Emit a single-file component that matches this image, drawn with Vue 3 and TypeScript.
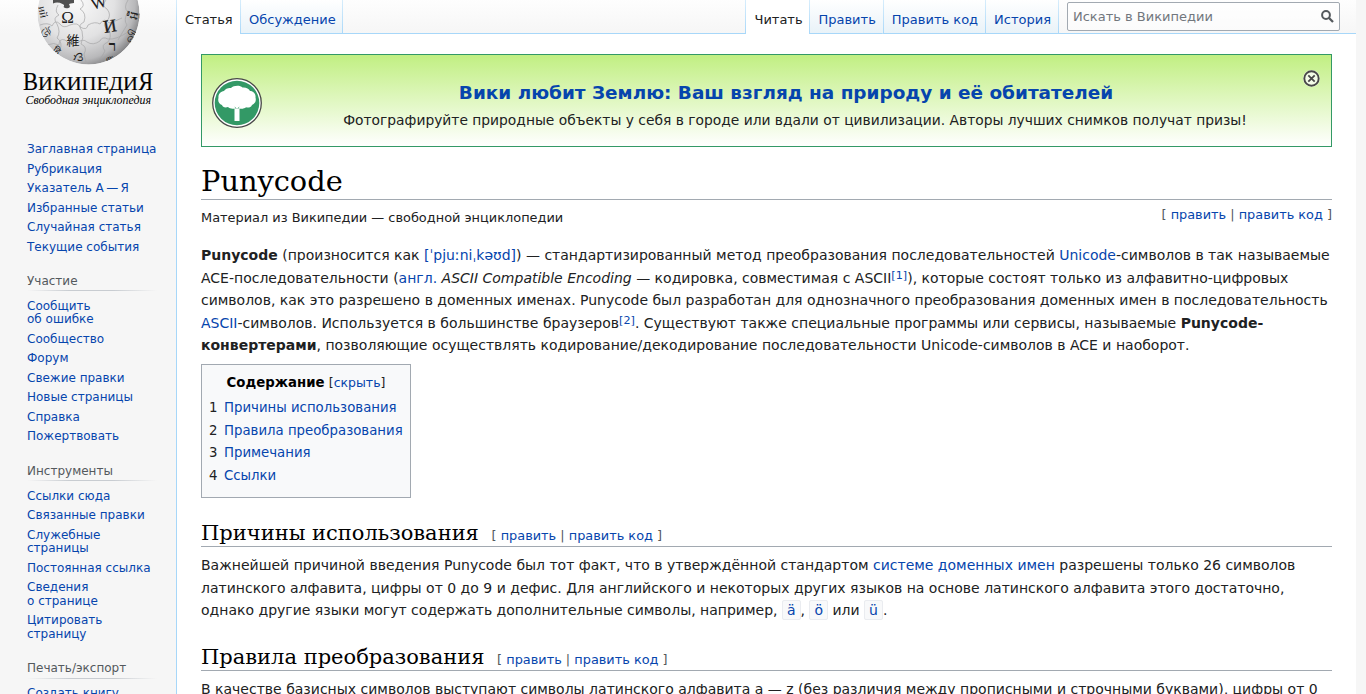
<script setup lang="ts">
interface NavGroup { title: string; items: string[][] }

const groups: NavGroup[] = [
  { title: '', items: [['Заглавная страница'], ['Рубрикация'], ['Указатель А\u2009—\u2009Я'], ['Избранные статьи'], ['Случайная статья'], ['Текущие события']] },
  { title: 'Участие', items: [['Сообщить', 'об ошибке'], ['Сообщество'], ['Форум'], ['Свежие правки'], ['Новые страницы'], ['Справка'], ['Пожертвовать']] },
  { title: 'Инструменты', items: [['Ссылки сюда'], ['Связанные правки'], ['Служебные', 'страницы'], ['Постоянная ссылка'], ['Сведения', 'о странице'], ['Цитировать', 'страницу']] },
  { title: 'Печать/экспорт', items: [['Создать книгу']] },
]
const toc: string[] = ['Причины использования', 'Правила преобразования', 'Примечания', 'Ссылки']
const views: string[] = ['Править', 'Править код', 'История']
</script>

<template>
  <div class="page">
    <aside class="side">
      <svg class="logo" width="160" height="112" viewBox="0 0 160 112">
        <defs>
          <radialGradient id="globe" cx="0.38" cy="0.38" r="0.68">
            <stop offset="0" stop-color="#fafafa" />
            <stop offset="0.55" stop-color="#e2e2e3" />
            <stop offset="0.85" stop-color="#b8b8ba" />
            <stop offset="1" stop-color="#7c7c7e" />
          </radialGradient>
          <clipPath id="ball"><circle cx="80.5" cy="13.5" r="51" /></clipPath>
        </defs>
        <g clip-path="url(#ball)">
          <circle cx="80.5" cy="13.5" r="51" fill="url(#globe)" />
          <path d="M45 0h21v3q-4 0-5 1.500 2 2.500-.5 3.500-3 1-5-1 1.500-2-1-3-5-2.500-9.500-.5z" fill="#505050" />
          <g fill="none" stroke="#a6a6a8" stroke-width=".7">
            <path d="M32 25q8-3 12 1 3-7 8-2 3 5 10 1 8-3 10 2 7 4 8-2 7-4 12-1 4-7 9-1 7-2 13-5" />
            <path d="M39 45q7-3 12 0 0-7 6-5 4 5 12 3 6-5 10-1 6 4 13-1 2-5 8-2 8 1 20-7" />
            <path d="M50 5q-4 7 1 10-7 3-2 9 4 8 0 14 6 4 3 12M73 0q5 6-1 9 7 4 4 13-7 3-2 9 2 7-1 13 7 3 3 10 1 6 3 10M98 0q-5 6 1 9 5 6 0 12-6 5 2 9 3 7-1 12-8 3-3 9-3 7-7 9M120 0q-5 8 0 12-5 8-1 13-5 8-9 15" />
          </g>
          <g fill="#202020" class="glyphs" text-anchor="middle">
            <text x="59.5" y="23" font-size="17">Ω</text>
            <text x="91" y="8" font-size="17" transform="rotate(-15 91 3)">W</text>
            <text x="102" y="32" font-size="18" stroke="#202020" stroke-width=".3" transform="rotate(-9 102 26)">И</text>
            <text x="65" y="44.5" font-size="13">維</text>
            <text x="104.5" y="51" font-size="15" font-weight="bold">ר</text>
            <text x="35.5" y="16" font-size="11" transform="rotate(78 35.5 12)">ий</text>
            <text x="37" y="37" font-size="12" transform="rotate(60 37 33)">উ</text>
            <text x="49" y="54" font-size="9" transform="rotate(38 49 51)">हि</text>
            <text x="72" y="61" font-size="12" transform="rotate(80 72 57)">ღ</text>
            <text x="126" y="19" font-size="12" transform="rotate(-78 126 15)">អ្វី</text>
            <text x="123" y="40" font-size="12" transform="rotate(-58 123 36)">வி</text>
            <text x="101" y="61" font-size="8" transform="rotate(-25 101 58)">ው</text>
          </g>
        </g>
        <g class="word">
          <text x="15" y="89.5" font-size="26" textLength="15" lengthAdjust="spacingAndGlyphs">В</text>
          <text x="30" y="89.5" font-size="19.5" textLength="100" lengthAdjust="spacingAndGlyphs">ИКИПЕДИ</text>
          <text x="130.500" y="89.5" font-size="26" textLength="14.500" lengthAdjust="spacingAndGlyphs">Я</text>
          <text class="tagline" x="17.5" y="104" font-size="12" font-style="italic" textLength="125.5" lengthAdjust="spacingAndGlyphs">Свободная энциклопедия</text>
        </g>
      </svg>
      <nav v-for="g in groups" :key="g.title" class="portal">
        <h3 v-if="g.title">{{ g.title }}</h3>
        <ul>
          <li v-for="it in g.items" :key="it[0]"><a><span v-for="l in it" :key="l">{{ l }}</span></a></li>
        </ul>
      </nav>
    </aside>

    <div class="main">
      <header class="head">
        <div class="tab on first"><span>Статья</span></div>
        <div class="tab talk"><a>Обсуждение</a></div>
        <div class="gap"></div>
        <div class="tab on read"><span>Читать</span></div>
        <div v-for="v in views" :key="v" class="tab"><a>{{ v }}</a></div>
        <div class="search">
          <span>Искать в Википедии</span>
          <svg width="13" height="13" viewBox="0 0 13 13"><circle cx="5" cy="5" r="3.9" fill="none" stroke="#54595d" stroke-width="2" /><path d="M7.8 7.8L12 12" stroke="#54595d" stroke-width="2.3" /></svg>
        </div>
      </header>

      <main class="content">
        <section class="banner">
          <svg class="tree" width="50" height="50" viewBox="0 0 50 50">
            <circle cx="25" cy="25" r="24.3" fill="#fff" stroke="#484848" stroke-width="1.3" />
            <circle cx="25" cy="25" r="22.3" fill="#339966" />
            <path d="M22.500 43V30.500C20 31 17.500 30.500 16 29 13 30 10.500 29 10 27 7 26 5.500 22.500 6.500 20 6 16 8.500 13.500 12 13 13.500 10.500 16.500 9.500 19 10 21.500 7.500 28 7 30.500 9.500 33.500 9 37 10.500 38 13 41.500 13 44 16 43.500 19.500 44.500 23 43 26 40 27 39 29.500 36 30 34 29.200 32.500 30.500 30 31 27.500 30.500V43z" fill="#fff" />
            <path d="M22.800 29.200q1 .5 1.300 1.500M27.200 29.200q-1 .5-1.300 1.500" fill="none" stroke="#339966" stroke-width=".9" />
          </svg>
          <div class="btext">
            <a>Вики любит Землю: Ваш взгляд на природу и её обитателей</a>
            <p>Фотографируйте природные объекты у себя в городе или вдали от цивилизации. Авторы лучших снимков получат призы!</p>
          </div>
          <svg class="close" width="17" height="17" viewBox="0 0 17 17"><circle cx="8.5" cy="8.5" r="8.5" fill="#fff" fill-opacity=".75" /><circle cx="8.5" cy="8.5" r="7.200" fill="none" stroke="#484848" stroke-width="1.900" /><path d="M5.300 5.300l6.400 6.400M11.700 5.300l-6.400 6.400" stroke="#484848" stroke-width="1.800" /></svg>
        </section>

        <h1>Punycode</h1>
        <div class="subrow">
          <div class="sub">Материал из Википедии — свободной энциклопедии</div>
          <div class="edit">[ <a>править</a> | <a>править код</a> ]</div>
        </div>

        <p class="lead"><b>Punycode</b> (произносится как <a>[ˈpjuːniˌkəʊd]</a>) — стандартизированный метод преобразования последовательностей <a>Unicode</a>-символов в так называемые<br />ACE-последовательности (<a>англ.</a> <i>ASCII Compatible Encoding</i> — кодировка, совместимая с ASCII<sup><a>[1]</a></sup>), которые состоят только из алфавитно-цифровых<br />символов, как это разрешено в доменных именах. Punycode был разработан для однозначного преобразования доменных имен в последовательность<br /><a>ASCII</a>-символов. Используется в большинстве браузеров<sup><a>[2]</a></sup>. Существуют также специальные программы или сервисы, называемые <b>Punycode-</b><br /><b>конвертерами</b>, позволяющие осуществлять кодирование/декодирование последовательности Unicode-символов в ACE и наоборот.</p>

        <div class="toc">
          <div class="toctitle"><b>Содержание</b> <span>[<a>скрыть</a>]</span></div>
          <ul>
            <li v-for="(t, i) in toc" :key="t"><span>{{ i + 1 }}</span><a>{{ t }}</a></li>
          </ul>
        </div>

        <h2>Причины использования <span class="edit">[ <a>править</a> | <a>править код</a> ]</span></h2>
        <p>Важнейшей причиной введения Punycode был тот факт, что в утверждённой стандартом <a>системе доменных имен</a> разрешены только 26 символов<br />латинского алфавита, цифры от 0 до 9 и дефис. Для английского и некоторых других языков на основе латинского алфавита этого достаточно,<br />однако другие языки могут содержать дополнительные символы, например, <code>ä</code>, <code>ö</code> или <code>ü</code>.</p>
        <h2>Правила преобразования <span class="edit">[ <a>править</a> | <a>править код</a> ]</span></h2>
        <p>В качестве базисных символов выступают символы латинского алфавита a — z (без различия между прописными и строчными буквами), цифры от 0</p>
      </main>
    </div>
  </div>
</template>

<style>
body { margin: 0; overflow: hidden; background: #f6f6f6; }
</style>
<style scoped>
.page { display: flex; width: 1356px; height: 694px; overflow: hidden; font-family: "DejaVu Sans", sans-serif; color: #202122; background: linear-gradient(#fff -6px, #f6f6f6 34px); }
a { color: #0645ad; }
ul { list-style: none; margin: 0; padding: 0; }
.side { width: 176px; flex: none; }
.logo { display: block; margin: 0 0 28.3px 8px; }
.glyphs { font-family: "Liberation Serif", "Noto Sans CJK JP", "DejaVu Sans", serif; }
.word { font-family: "Liberation Serif", serif; fill: #000; stroke: #000; stroke-width: .15px; }
.tagline { stroke: none; }
.portal { margin-left: 27px; width: 140px; font-size: 12px; line-height: 13.5px; }
.portal:nth-of-type(2) { margin-top: -.4px; }
.portal h3 { margin: 0 0 5.7px; padding: 17.7px 0 3.1px; height: 13.5px; width: 130px; font-size: 12px; font-weight: 400; color: #54595d; background: linear-gradient(to right, rgba(200,204,209,0), #c8ccd1 33%, #c8ccd1 66%, rgba(200,204,209,0)) bottom / 100% 1px no-repeat; }
.portal li { padding: 3px 0; white-space: nowrap; }
.portal li span { display: block; }
.main { flex: 1; display: flex; flex-direction: column; }
.head { height: 34px; box-sizing: border-box; display: flex; background: linear-gradient(#a7d7f9, #a7d7f9) bottom / 100% 1px no-repeat; font-size: 13px; }
.tab { box-sizing: border-box; height: 34px; padding: 12px 7px 0 8px; line-height: 16px; white-space: nowrap; border-right: 1px solid; border-image: linear-gradient(#d9eefc, #a7d7f9) 1; border-width: 0 1px 0 0; background: linear-gradient(#a7d7f9, #a7d7f9) bottom / 100% 1px no-repeat, linear-gradient(#fff, #e8f2f8); }
.tab.on { background: #fff; }
.tab.first { width: 65px; padding-left: 8px; border-left: 1px solid #a7d7f9; border-width: 0 1px 0 1px; }
.tab.talk { width: 102px; }
.gap { flex: 1; }
.tab.read { width: 65px; border-style: solid; border-width: 0 1px; }
.search { box-sizing: border-box; width: 273px; height: 29px; margin: 2px 16px 0 8px; padding: 0 5px; border: 1px solid #a2a9b1; border-radius: 2px; background: rgba(255,255,255,.5); display: flex; align-items: center; justify-content: space-between; color: #72777d; }
.content { flex: 1; background: #fff; border-left: 1px solid #a7d7f9; padding: 20px 24px 0; font-size: 14px; line-height: 22.4px; white-space: nowrap; }
.banner { position: relative; box-sizing: border-box; height: 93px; border: 1px solid #339966; background: linear-gradient(#c1ef82, #fff); display: flex; align-items: center; padding: 5px 5px 0 10px; }
.tree { flex: none; }
.btext { flex: 1; text-align: center; padding: 3px 0 0 2px; }
.btext a { display: block; font-size: 18.45px; font-weight: 700; line-height: 29px; margin-right: 18px; }
.banner p { margin: 1.5px 0 0; font-size: 13.83px; }
.close { position: absolute; top: 15px; right: 11px; }
h1, h2 { font-family: "DejaVu Serif", serif; font-weight: 400; color: #000; border-bottom: 1px solid #a2a9b1; margin: 0; }
h1 { font-size: 28.8px; line-height: 36px; padding-top: 1.44px; margin: 15px 0 7.2px; }
h2 { font-size: 21px; line-height: 26px; padding-top: 1.3px; margin-top: 21px; }
.subrow { display: flex; justify-content: space-between; height: 29.7px; }
.sub { font-size: 12.92px; line-height: 20.6px; }
.edit { font-family: "DejaVu Sans", sans-serif; font-size: 12.88px; color: #54595d; line-height: 14px; }
h2 .edit { margin-left: 6px; }
p { margin: 7px 0; }
sup { font-size: 11.200px; line-height: 1; vertical-align: 4px; }
.toc { box-sizing: border-box; width: 210px; height: 134px; margin-top: 7.7px; padding: 7px; border: 1px solid #a2a9b1; background: #f8f9fa; font-size: 13.3px; line-height: 21.3px; }
.toctitle { text-align: center; color: #000; }
.toctitle span { font-size: 12.500px; color: #202122; }
.toc ul { margin-top: 4px; }
.toc li { display: flex; gap: 6.5px; height: 22.5px; }
code { font-family: "DejaVu Sans", sans-serif; color: #0645ad; background: #f8f9fa; border: 1px solid #eaecf0; border-radius: 2px; padding: 1px 4px; }
</style>
